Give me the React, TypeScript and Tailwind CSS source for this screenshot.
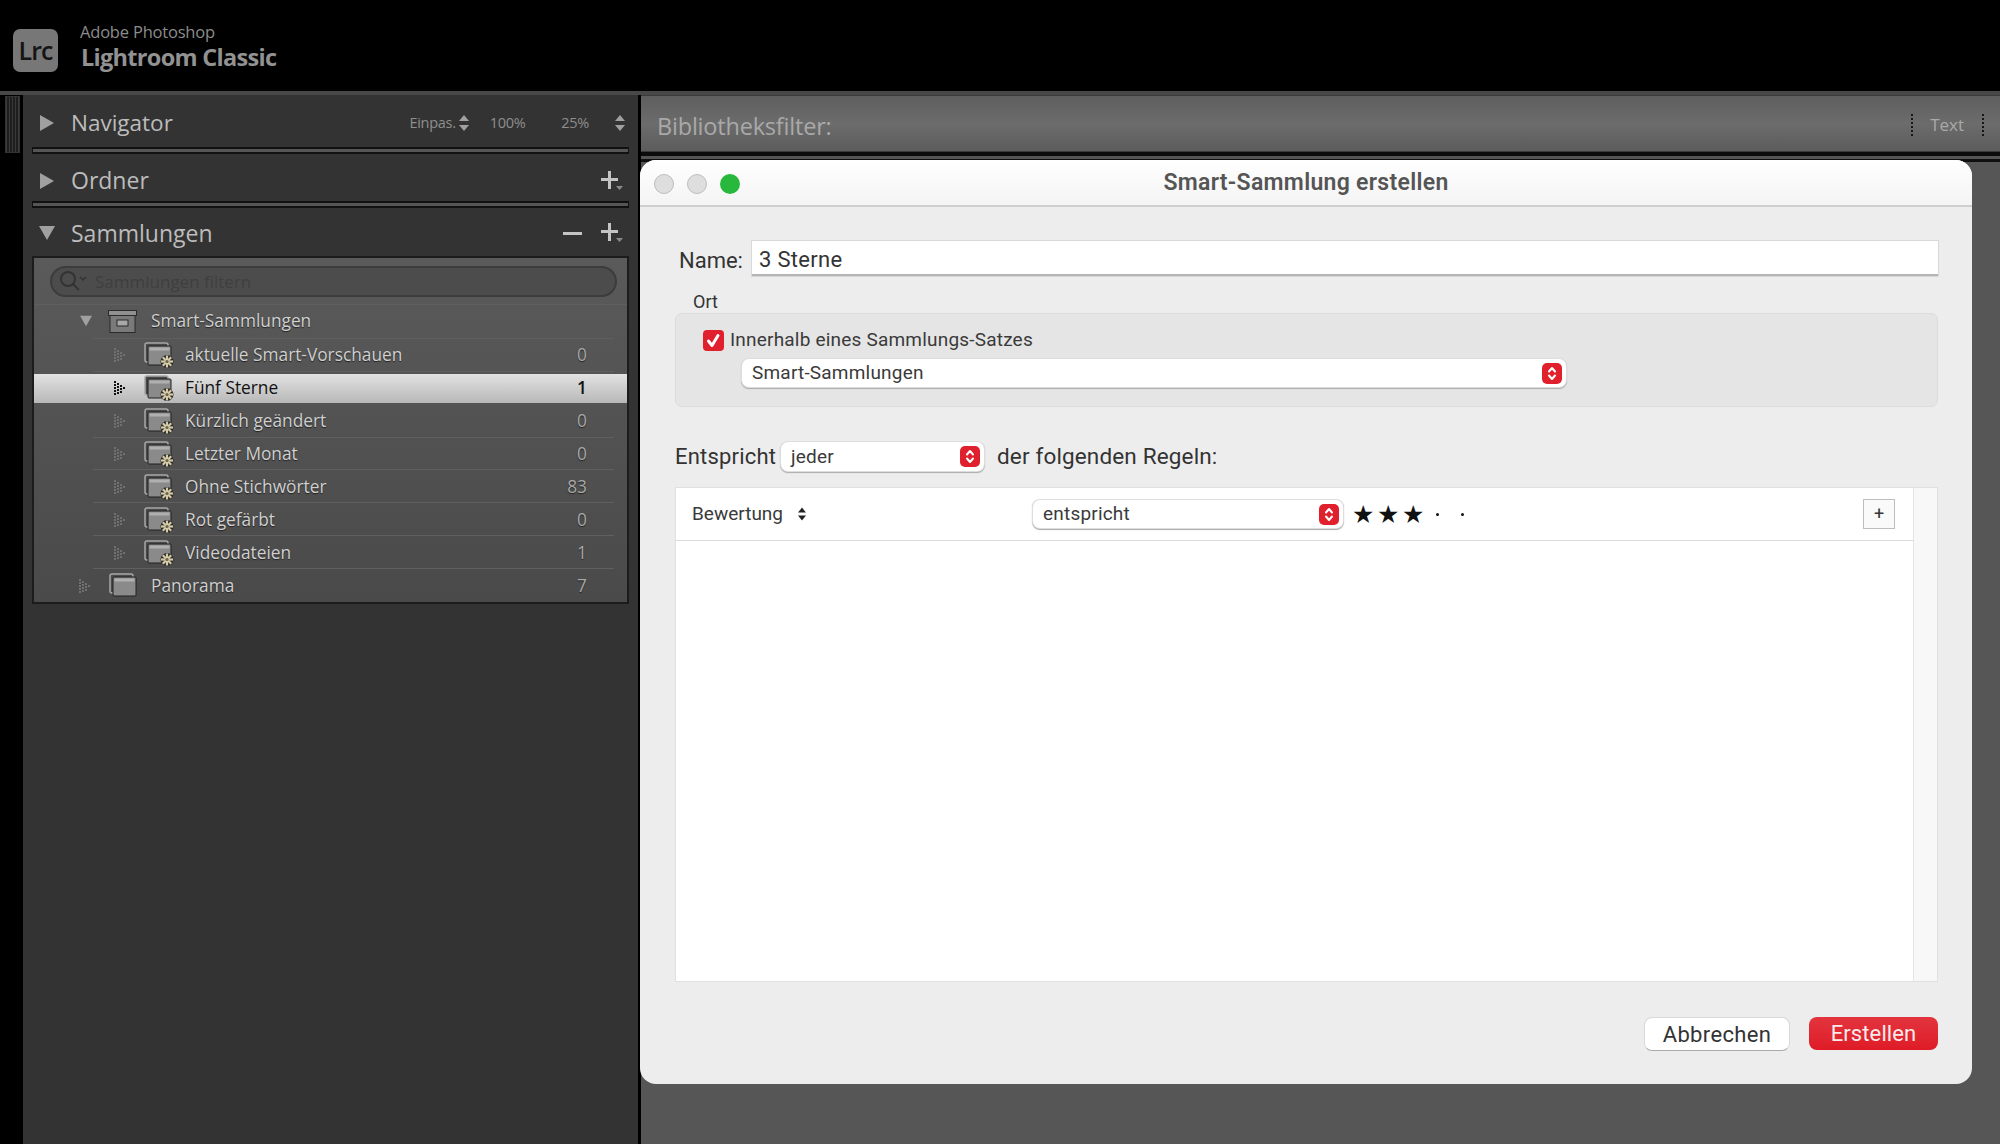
import React from "react";

const Tri = ({ down = false, className = "" }: { down?: boolean; className?: string }) => (
  <svg width="16" height="16" viewBox="0 0 16 16" className={className}>
    <polygon points={down ? "0,1 16,1 8,15" : "1,0 15,8 1,16"} fill="#a0a0a0" />
  </svg>
);

const Updown = ({ color = "#a0a0a0", className = "" }: { color?: string; className?: string }) => (
  <svg width="10" height="16" viewBox="0 0 10 16" className={className}>
    <polygon points="5,0 10,6 0,6" fill={color} />
    <polygon points="5,16 10,10 0,10" fill={color} />
  </svg>
);

const Plus = ({ className = "" }: { className?: string }) => (
  <svg width="22" height="20" viewBox="0 0 22 20" className={className}>
    <rect x="0" y="7" width="17" height="3" fill="#c4c4c4" />
    <rect x="7" y="0" width="3" height="18" fill="#c4c4c4" />
    <polygon points="15,15 22,15 18.5,19" fill="#8a8a8a" />
  </svg>
);

const Dots = ({ dark = false }: { dark?: boolean }) => {
  const c = dark ? "#111" : "#707070";
  const pts = [[0,0],[0,3],[0,6],[0,9],[0,12],[3,2],[3,5],[3,8],[3,11],[6,4],[6,7],[6,10],[9,7]];
  return (
    <svg width="13" height="14" viewBox="0 0 13 14">
      {pts.map(([x, y], i) => (
        <rect key={i} x={x} y={y - (x === 9 ? 1 : 0)} width="2" height="2" fill={c} />
      ))}
    </svg>
  );
};

const CollIcon = ({ gear = true }: { gear?: boolean }) => (
  <svg width="30" height="26" viewBox="0 0 30 26">
    <rect x="1" y="1" width="23" height="19" rx="2" fill="#4a4a4a" stroke="#a8a8a8" strokeWidth="1.5" />
    <rect x="4" y="4" width="23" height="19" rx="1" fill="#8a8a8a" stroke="#202020" strokeWidth="1" />
    <rect x="5.5" y="5.5" width="20" height="3" fill="#b0b0b0" />
    {gear && (
      <g>
        <circle cx="23" cy="19.5" r="6.5" fill="#2b2b2b" />
        <g stroke="#d6cba8" strokeWidth="2.2">
          <line x1="23" y1="13.5" x2="23" y2="25.5" />
          <line x1="17" y1="19.5" x2="29" y2="19.5" />
          <line x1="18.8" y1="15.3" x2="27.2" y2="23.7" />
          <line x1="27.2" y1="15.3" x2="18.8" y2="23.7" />
        </g>
        <circle cx="23" cy="19.5" r="1.6" fill="#6a6350" />
      </g>
    )}
  </svg>
);

const SetIcon = () => (
  <svg width="29" height="23" viewBox="0 0 29 23">
    <rect x="0.5" y="0.5" width="28" height="5" fill="#909090" stroke="#2a2a2a" />
    <rect x="2" y="5.5" width="25" height="17" fill="#7a7a7a" stroke="#2a2a2a" />
    <rect x="9" y="10" width="11" height="6" fill="#a8a8a8" stroke="#2a2a2a" />
  </svg>
);

const RedBadge = () => (
  <span className="flex h-[21px] w-[20px] items-center justify-center rounded-[5px] bg-[#e0202c]">
    <svg width="10" height="15" viewBox="0 0 10 15" fill="none" stroke="#fff" strokeWidth="2" strokeLinecap="round" strokeLinejoin="round">
      <path d="M2 5.5 L5 2 L8 5.5" />
      <path d="M2 9.5 L5 13 L8 9.5" />
    </svg>
  </span>
);

const Select = ({ label, className }: { label: string; className: string }) => (
  <div className={`flex items-center justify-between rounded-[7px] bg-white pl-[10px] pr-[4px] shadow-[0_0_0_1px_#dddddd,0_1px_1px_1px_#aaaaaa] ${className}`}>
    <span className="pt-[1px] text-[19px] tracking-[0.2px] text-[#3a3a3a]">{label}</span>
    <RedBadge />
  </div>
);

const rows: [string, string, boolean?][] = [
  ["aktuelle Smart-Vorschauen", "0"],
  ["Fünf Sterne", "1", true],
  ["Kürzlich geändert", "0"],
  ["Letzter Monat", "0"],
  ["Ohne Stichwörter", "83"],
  ["Rot gefärbt", "0"],
  ["Videodateien", "1"],
];

const PanelBar = () => <div className="mx-[9px] h-[7px] border-y-2 border-x border-[#111] bg-[#555]" />;

const lcFont = "font-['Open_Sans',sans-serif]";

export default function App() {
  return (
    <div className={`relative flex h-[1144px] w-[2000px] flex-col overflow-hidden bg-black ${lcFont}`}>
      {/* top bar */}
      <header className="flex h-[91px] items-start pl-[13px] pt-[21px]">
        <div className="mt-[8px] flex h-[43px] w-[45px] items-center justify-center rounded-[7px] bg-[#777] text-[25px] font-semibold tracking-[-1px] text-[#151515]">Lrc</div>
        <div className="ml-[22px] flex flex-col">
          <span className="text-[16.5px] leading-[22px] tracking-[-0.2px] text-[#8c8c8c]">Adobe Photoshop</span>
          <span className="ml-[1px] text-[23.5px] font-bold leading-[29px] tracking-[-0.7px] text-[#929292]">Lightroom Classic</span>
        </div>
      </header>
      <div className="h-[4px] bg-[#484848]" />

      <div className="flex flex-1">
        {/* left strip */}
        <div className="w-[23px] bg-black pl-[5px] pt-[1px]">
          <div className="h-[57px] w-[15px] border border-[#333] bg-[repeating-linear-gradient(90deg,#3a3a3a_0,#3a3a3a_1px,#1e1e1e_1px,#1e1e1e_3px)]" />
        </div>

        {/* left panel */}
        <aside className="flex w-[615px] flex-col bg-[#333]">
          <div className="flex h-[52px] items-center pl-[16px] pt-[3px]">
            <Tri />
            <span className="ml-[16px] text-[22.5px] text-[#bcbcbc]">Navigator</span>
            <div className="ml-auto flex items-center pr-[13px] text-[14.5px] tracking-[-0.3px] text-[#8e8e8e]">
              <span>Einpas.</span>
              <Updown className="ml-[3px]" />
              <span className="ml-[21px]">100%</span>
              <span className="ml-[36px]">25%</span>
              <Updown className="ml-[26px]" />
            </div>
          </div>
          <PanelBar />
          <div className="flex h-[47px] items-center pl-[16px] pt-[6px]">
            <Tri />
            <span className="ml-[16px] text-[23px] text-[#bcbcbc]">Ordner</span>
            <Plus className="ml-auto mr-[15px]" />
          </div>
          <PanelBar />
          <div className="flex h-[48px] items-center pl-[16px] pt-[2px]">
            <Tri down />
            <span className="ml-[16px] text-[23px] text-[#bcbcbc]">Sammlungen</span>
            <div className="ml-auto mr-[15px] flex items-center">
              <div className="mr-[19px] h-[3px] w-[19px] bg-[#c4c4c4]" />
              <Plus />
            </div>
          </div>

          {/* list */}
          <div className="mx-[9px] flex h-[348px] flex-col border-2 border-[#1c1c1c] bg-gradient-to-b from-[#5a5a5a] to-[#4a4a4a]">
            <div className="flex h-[47px] shrink-0 items-center border-b border-[#5f5f5f] pl-[16px] pr-[10px]">
              <div className="flex h-[31px] w-full items-center rounded-full border-2 border-[#3c3c3c] bg-[#4c4c4c] pl-[7px]">
                <svg width="30" height="22" viewBox="0 0 30 22" fill="none" stroke="#333" strokeWidth="2">
                  <circle cx="9" cy="9" r="7" />
                  <line x1="14" y1="14" x2="20" y2="20" />
                  <path d="M21 7 l3 3 l3 -3" strokeWidth="1.5" />
                </svg>
                <span className="ml-[6px] pt-[1px] text-[17px] text-[#3f3f3f]">Sammlungen filtern</span>
              </div>
            </div>
            <div className="relative flex h-[34px] items-center pb-[1px] text-[17.3px] text-[#d0d0d0]">
              <Tri down className="ml-[46px] h-[12px] w-[12px]" />
              <span className="ml-[16px] flex"><SetIcon /></span>
              <span className="ml-[14px] [text-shadow:0_1px_1px_#222]">Smart-Sammlungen</span>
              <div className="absolute bottom-0 left-[59px] right-[13px] h-px bg-[#5f5f5f]" />
            </div>
            {rows.map(([name, count, sel]) => (
              <div
                key={name}
                className={`relative flex h-[33.2px] items-center pl-[80px] pr-[40px] text-[17.3px] ${sel ? "border-y-[2px] border-transparent bg-gradient-to-b from-[#e2e2e2] to-[#b8b8b8] bg-clip-padding text-[#111]" : "text-[#d0d0d0] [text-shadow:0_1px_1px_#222]"}`}
              >
                <Dots dark={!!sel} />
                <span className="ml-[17px] flex"><CollIcon /></span>
                <span className="ml-[11px]">{name}</span>
                <span className={`ml-auto ${sel ? "font-semibold" : "text-[#a8a8a8]"}`}>{count}</span>
                {!sel && <div className="absolute bottom-0 left-[59px] right-[13px] h-px bg-[#5f5f5f]" />}
              </div>
            ))}
            <div className="flex h-[33px] items-center pl-[45px] pr-[40px] text-[17.3px] text-[#d0d0d0] [text-shadow:0_1px_1px_#222]">
              <Dots />
              <span className="ml-[17px] flex"><CollIcon gear={false} /></span>
              <span className="ml-[12px]">Panorama</span>
              <span className="ml-auto text-[#a8a8a8]">7</span>
            </div>
          </div>
        </aside>

        <div className="w-[3px] bg-black" />

        {/* right area */}
        <main className="flex flex-1 flex-col bg-[#565656]">
          <div className="flex h-[57px] items-center border-y border-[#3a3a3a] bg-gradient-to-b from-[#5e5e5e] via-[#6c6c6c] to-[#5c5c5c] pl-[16px] pt-[3px]">
            <span className="pt-[3px] text-[23.5px] tracking-[-0.2px] text-[#a9a9a9]">Bibliotheksfilter:</span>
            <div className="ml-auto flex items-center pr-[16px]">
              <div className="h-[22px] border-l-2 border-dotted border-[#161616]" />
              <span className="ml-[17px] text-[17px] text-[#a9a9a9]">Text</span>
              <div className="ml-[18px] h-[22px] border-l-2 border-dotted border-[#161616]" />
            </div>
          </div>
          <div className="h-[4px] bg-[#0c0c0c]" />
          <div className="h-[3px] bg-[#555]" />
          <div className="h-[3px] bg-[#101010]" />
        </main>
      </div>

      {/* dialog */}
      <div className="absolute left-[640px] top-[160px] flex h-[924px] w-[1332px] flex-col rounded-[16px] bg-[#ededed] font-['Roboto',sans-serif] text-[#333]">
        <div className="relative flex h-[47px] shrink-0 items-center justify-center rounded-t-[16px] border-b-2 border-[#cfcfcf] bg-gradient-to-b from-white to-[#f4f4f4] pt-[2px]">
          <div className="absolute left-[14px] top-[14px] flex gap-[13px]">
            <div className="h-[20px] w-[20px] rounded-full border border-[#bdbdbd] bg-[#dedede]" />
            <div className="h-[20px] w-[20px] rounded-full border border-[#bdbdbd] bg-[#dedede]" />
            <div className="h-[20px] w-[20px] rounded-full bg-[#28b83c]" />
          </div>
          <span className="text-[23px] font-semibold tracking-[0.3px] text-[#555]">Smart-Sammlung erstellen</span>
        </div>

        <div className="flex flex-1 flex-col pl-[35px] pr-[34px] pt-[34px]">
          <div className="flex h-[35px] items-center pl-[4px] pt-[4px]">
            <span className="w-[73px] text-[22px]">Name:</span>
            <div className="relative flex h-[35px] flex-1 -translate-y-[2px] items-center border-b-2 border-[#b5b5b5] bg-white pl-[7px] pt-[4px] text-[22px] tracking-[0.3px] shadow-[0_0_0_1px_#d8d8d8]">3 Sterne</div>
          </div>
          <div className="mt-[13px] pl-[18px] pt-[1px] text-[18px] leading-[23px]">Ort</div>
          <div className="h-[94px] rounded-[7px] border border-[#dcdcdc] bg-[#e5e5e5] pt-[15px]">
            <div className="flex h-[22px] items-center pl-[27px]">
              <span className="flex h-[21px] w-[21px] items-center justify-center rounded-[4px] bg-[#e0202c]">
                <svg width="15" height="15" viewBox="0 0 15 15" fill="none" stroke="#fff" strokeWidth="3" strokeLinecap="round" strokeLinejoin="round">
                  <path d="M2.5 8 L6 12.5 L12 2.5" />
                </svg>
              </span>
              <span className="ml-[6px] text-[19px] tracking-[0.2px] text-[#3a3a3a]">Innerhalb eines Sammlungs-Satzes</span>
            </div>
            <Select label="Smart-Sammlungen" className="ml-[66px] mt-[8px] h-[28px] w-[824px]" />
          </div>

          <div className="mt-[35px] flex h-[29px] items-center">
            <span className="w-[106px] text-[22px] tracking-[0.2px]">Entspricht</span>
            <Select label="jeder" className="h-[29px] w-[203px]" />
            <span className="ml-[13px] text-[22.5px] tracking-[0.15px]">der folgenden Regeln:</span>
          </div>

          <div className="mt-[16px] flex h-[495px] border border-[#e0e0e0] bg-[#f8f8f8]">
            <div className="w-[1238px] border-r border-[#e4e4e4] bg-white">
              <div className="flex h-[53px] items-center border-b border-[#dcdcdc] pl-[16px]">
                <span className="w-[98px] text-[19px] text-[#3a3a3a]">Bewertung</span>
                <Updown color="#222" className="ml-[8px] h-[14px] w-[8px]" />
                <Select label="entspricht" className="ml-[227px] h-[28px] w-[310px]" />
                <div className="ml-[9px] flex items-center text-[#111]">
                  <span className="w-[25px] text-[25px] leading-none">★</span>
                  <span className="w-[25px] text-[25px] leading-none">★</span>
                  <span className="w-[25px] text-[25px] leading-none">★</span>
                  <span className="ml-[9px] h-[3px] w-[3px] rounded-full bg-[#111]" />
                  <span className="ml-[22px] h-[3px] w-[3px] rounded-full bg-[#111]" />
                </div>
                <div className="ml-auto mr-[18px] flex h-[30px] w-[32px] items-center justify-center border border-[#bdbdbd] bg-[#fafafa] text-[18px] leading-none text-[#333]">+</div>
              </div>
            </div>
          </div>

          <div className="mt-[35px] flex items-start justify-end">
            <button className="h-[34px] w-[146px] rounded-[8px] border border-[#d8d8d8] border-b-[#aaa] bg-white text-[22px] tracking-[0.35px] text-[#333]">Abbrechen</button>
            <button className="ml-[19px] h-[33px] w-[129px] rounded-[8px] bg-gradient-to-b from-[#e2343e] to-[#df1a26] text-[22px] tracking-[0.1px] text-[#fbeaea]">Erstellen</button>
          </div>
        </div>
      </div>
    </div>
  );
}
